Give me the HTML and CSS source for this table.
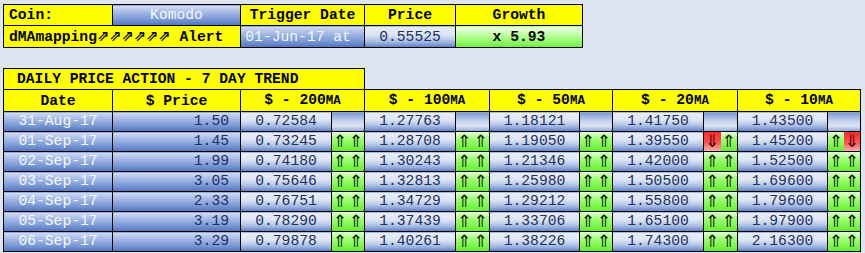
FILE: index.html
```html
<!DOCTYPE html>
<html>
<head>
<meta charset="utf-8">
<link rel="stylesheet" href="styles.css">
</head>
<body>
<table class="sheet alert">
  <colgroup><col class="c109"><col class="c128"><col class="c124"><col class="c91"><col class="c127"></colgroup>
  <tr>
    <td class="yel left">Coin:</td>
    <td class="blue deep light">Komodo</td>
    <td class="yel">Trigger Date</td>
    <td class="yel">Price</td>
    <td class="yel">Growth</td>
  </tr>
  <tr>
    <td class="yel left" colspan="2">dMAmapping<span class="ne">⇗⇗⇗⇗⇗⇗</span> Alert</td>
    <td class="blue deep light">01-Jun-17 at&nbsp;</td>
    <td class="blue num">0.55525</td>
    <td class="green">x 5.93</td>
  </tr>
</table>

<table class="sheet trend">
  <colgroup>
    <col class="c109"><col class="c128">
    <col class="c91"><col class="c33">
    <col class="c91"><col class="c34">
    <col class="c90"><col class="c33">
    <col class="c91"><col class="c34">
    <col class="c90"><col class="c33">
  </colgroup>
  <tr>
    <td class="yel left title" colspan="4">DAILY PRICE ACTION - 7 DAY TREND</td>
    <td class="void" colspan="8"></td>
  </tr>
  <tr>
    <td class="yel">Date</td>
    <td class="yel">$ Price</td>
    <td class="yel" colspan="2">$ - 200<span class="ma">MA</span></td>
    <td class="yel" colspan="2">$ - 100<span class="ma">MA</span></td>
    <td class="yel" colspan="2">$ - 50<span class="ma">MA</span></td>
    <td class="yel" colspan="2">$ - 20<span class="ma">MA</span></td>
    <td class="yel" colspan="2">$ - 10<span class="ma">MA</span></td>
  </tr>
  <tr class="row">
    <td class="blue deep light">31-Aug-17</td><td class="blue deep num right">1.50</td>
    <td class="blue num">0.72584</td><td class="blue empty"></td>
    <td class="blue num">1.27763</td><td class="blue empty"></td>
    <td class="blue num">1.18121</td><td class="blue empty"></td>
    <td class="blue num">1.41750</td><td class="blue empty"></td>
    <td class="blue num">1.43500</td><td class="blue empty"></td>
  </tr>
  <tr class="row">
    <td class="blue deep light">01-Sep-17</td><td class="blue deep num right">1.45</td>
    <td class="blue num">0.73245</td><td class="arr"><span class="up">⇑</span><span class="up">⇑</span></td>
    <td class="blue num">1.28708</td><td class="arr"><span class="up">⇑</span><span class="up">⇑</span></td>
    <td class="blue num">1.19050</td><td class="arr"><span class="up">⇑</span><span class="up">⇑</span></td>
    <td class="blue num">1.39550</td><td class="arr"><span class="dn">⇓</span><span class="up">⇑</span></td>
    <td class="blue num">1.45200</td><td class="arr"><span class="up">⇑</span><span class="dn">⇓</span></td>
  </tr>
  <tr class="row">
    <td class="blue deep light">02-Sep-17</td><td class="blue deep num right">1.99</td>
    <td class="blue num">0.74180</td><td class="arr"><span class="up">⇑</span><span class="up">⇑</span></td>
    <td class="blue num">1.30243</td><td class="arr"><span class="up">⇑</span><span class="up">⇑</span></td>
    <td class="blue num">1.21346</td><td class="arr"><span class="up">⇑</span><span class="up">⇑</span></td>
    <td class="blue num">1.42000</td><td class="arr"><span class="up">⇑</span><span class="up">⇑</span></td>
    <td class="blue num">1.52500</td><td class="arr"><span class="up">⇑</span><span class="up">⇑</span></td>
  </tr>
  <tr class="row">
    <td class="blue deep light">03-Sep-17</td><td class="blue deep num right">3.05</td>
    <td class="blue num">0.75646</td><td class="arr"><span class="up">⇑</span><span class="up">⇑</span></td>
    <td class="blue num">1.32813</td><td class="arr"><span class="up">⇑</span><span class="up">⇑</span></td>
    <td class="blue num">1.25980</td><td class="arr"><span class="up">⇑</span><span class="up">⇑</span></td>
    <td class="blue num">1.50500</td><td class="arr"><span class="up">⇑</span><span class="up">⇑</span></td>
    <td class="blue num">1.69600</td><td class="arr"><span class="up">⇑</span><span class="up">⇑</span></td>
  </tr>
  <tr class="row">
    <td class="blue deep light">04-Sep-17</td><td class="blue deep num right">2.33</td>
    <td class="blue num">0.76751</td><td class="arr"><span class="up">⇑</span><span class="up">⇑</span></td>
    <td class="blue num">1.34729</td><td class="arr"><span class="up">⇑</span><span class="up">⇑</span></td>
    <td class="blue num">1.29212</td><td class="arr"><span class="up">⇑</span><span class="up">⇑</span></td>
    <td class="blue num">1.55800</td><td class="arr"><span class="up">⇑</span><span class="up">⇑</span></td>
    <td class="blue num">1.79600</td><td class="arr"><span class="up">⇑</span><span class="up">⇑</span></td>
  </tr>
  <tr class="row">
    <td class="blue deep light">05-Sep-17</td><td class="blue deep num right">3.19</td>
    <td class="blue num">0.78290</td><td class="arr"><span class="up">⇑</span><span class="up">⇑</span></td>
    <td class="blue num">1.37439</td><td class="arr"><span class="up">⇑</span><span class="up">⇑</span></td>
    <td class="blue num">1.33706</td><td class="arr"><span class="up">⇑</span><span class="up">⇑</span></td>
    <td class="blue num">1.65100</td><td class="arr"><span class="up">⇑</span><span class="up">⇑</span></td>
    <td class="blue num">1.97900</td><td class="arr"><span class="up">⇑</span><span class="up">⇑</span></td>
  </tr>
  <tr class="row">
    <td class="blue deep light">06-Sep-17</td><td class="blue deep num right">3.29</td>
    <td class="blue num">0.79878</td><td class="arr"><span class="up">⇑</span><span class="up">⇑</span></td>
    <td class="blue num">1.40261</td><td class="arr"><span class="up">⇑</span><span class="up">⇑</span></td>
    <td class="blue num">1.38226</td><td class="arr"><span class="up">⇑</span><span class="up">⇑</span></td>
    <td class="blue num">1.74300</td><td class="arr"><span class="up">⇑</span><span class="up">⇑</span></td>
    <td class="blue num">2.16300</td><td class="arr"><span class="up">⇑</span><span class="up">⇑</span></td>
  </tr>
</table>
</body>
</html>
```
FILE: styles.css
```css
html, body {
  margin: 0;
  background: #dfe5f0;
}
body {
  padding: 4px 3px;
  font-family: "Liberation Mono", "Courier New", monospace;
  font-size: 14.67px;
}
.sheet {
  border-collapse: collapse;
  table-layout: fixed;
}
.alert { width: 579px; }
.trend { width: 857px; margin-top: 20px; }
.c109 { width: 109px; }
.c128 { width: 128px; }
.c124 { width: 124px; }
.c127 { width: 127px; }
.c91 { width: 91px; }
.c90 { width: 90px; }
.c33 { width: 33px; }
.c34 { width: 34px; }

.sheet td {
  border: 1px solid #000;
  padding: 0;
  text-align: center;
  white-space: nowrap;
  overflow: hidden;
  height: 20px;
  line-height: 20px;
}
.trend .row td { height: 19px; line-height: 19px; }
.yel {
  background: #ffff00;
  font-weight: bold;
  color: #000;
}
.left { text-align: left !important; padding-left: 5px !important; }
.title { padding-left: 13px !important; }
.void { border: none !important; border-bottom: 1px solid #000 !important; background: transparent; }
.blue {
  background: linear-gradient(to bottom, #e9eef8 0%, #dde5f4 40%, #a6bbe3 72%, #5a7cc4 100%);
}
.blue.deep {
  background: linear-gradient(to bottom, #d6dff3 0%, #a9bde7 30%, #7f9cd7 65%, #5074c0 100%);
}
.blue.empty {
  background: linear-gradient(to bottom, #7c98d2 0%, #c4d2ee 45%, #dde5f4 70%, #8aa4da 100%);
}
.light { color: #f4f7fd; }
.num { color: #1d2f63; }
.right { text-align: right !important; padding-right: 11px !important; }
.green {
  background: linear-gradient(to bottom, #f4fff0 0%, #b8ff98 45%, #6cf23c 100%);
  font-weight: bold;
}
.ne { font-family: "DejaVu Sans", sans-serif; font-weight: bold; }
.ma { font-size: 12.5px; }
.arr { font-size: 0; }
.arr span {
  display: inline-block;
  width: 50%;
  height: 19px;
  font-family: "DejaVu Sans", sans-serif;
  font-size: 17px;
  line-height: 19px;
  vertical-align: top;
  color: #0a1a0a;
}
.up { background: linear-gradient(to bottom, #e4ffd8 0%, #9dff70 40%, #62ee30 100%); }
.dn { background: linear-gradient(to bottom, #ff2a2a 0%, #ff5050 55%, #ffb0b0 100%); color: #400000 !important; }
```
